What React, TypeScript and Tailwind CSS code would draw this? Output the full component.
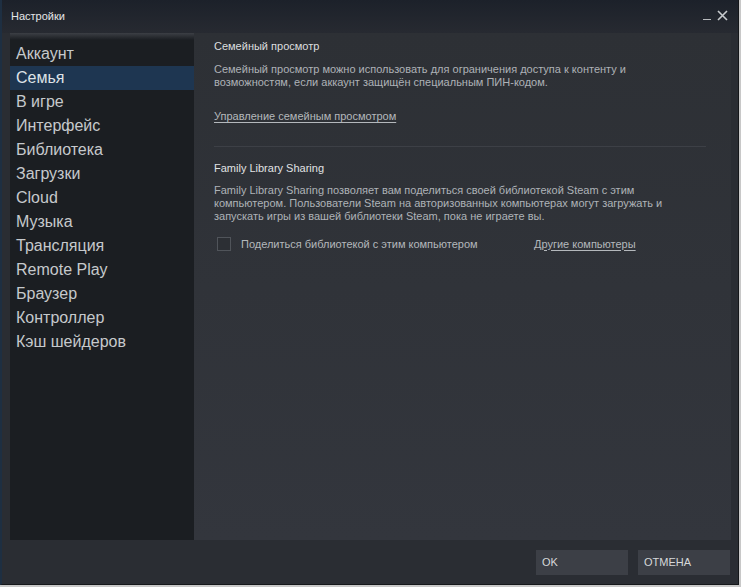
import React from "react";

const menu = [
  "Аккаунт",
  "Семья",
  "В игре",
  "Интерфейс",
  "Библиотека",
  "Загрузки",
  "Cloud",
  "Музыка",
  "Трансляция",
  "Remote Play",
  "Браузер",
  "Контроллер",
  "Кэш шейдеров",
];

const font = { fontFamily: '"Liberation Sans", Arial, sans-serif' };

const App: React.FC = () => {
  return (
    <div className="w-[741px] h-[587px] bg-[#c8c8c8] pr-[2px] pb-[2px]" style={font}>
      <div className="w-full h-full flex flex-col bg-[#2a2d33] border-r border-b border-[#15171a] border-l-2 border-l-[#1e2f42]">
        {/* title bar */}
        <div className="h-[33px] shrink-0 flex items-start justify-between bg-gradient-to-b from-[#1c212a] to-[#272a31] pl-[9px] pr-[10px]">
          <span className="mt-[10px] text-[11px] leading-[13px] text-[#e4e6e8]">Настройки</span>
          <div className="flex items-start gap-[6px] mt-[8px]">
            <span className="mt-[11px] w-[8px] h-[1px] bg-[#b8bbbe]" />
            <svg width="11" height="11" viewBox="0 0 11 11" className="mt-[2px]">
              <path d="M1 1 L10 10 M10 1 L1 10" stroke="#c8cbce" strokeWidth="1.6" />
            </svg>
          </div>
        </div>

        {/* body */}
        <div className="flex h-[507px] shrink-0 pl-[8px] pr-[7px]">
          <div className="w-[184px] bg-[#1b1e22] flex flex-col">
            <div className="h-[7px] bg-gradient-to-b from-[#3c3f45] to-[#1b1e22]" />
            <div className="pt-[2px]">
              {menu.map((item) => (
                <div
                  key={item}
                  className={`h-[24px] pl-[6px] text-[16px] leading-[24px] text-[#c6c9cc] ${
                    item === "Семья" ? "bg-[#1e3651] text-[#dfe3e7]" : ""
                  }`}
                >
                  {item}
                </div>
              ))}
            </div>
          </div>

          <div className="flex-1 bg-gradient-to-b from-[#2d3035] to-[#33363d] pl-[20px] pt-[7px] text-[11px] leading-[13px]">
            <div className="text-[#dcdedf]">Семейный просмотр</div>
            <p className="mt-[10px] text-[#aeb2b7]">
              Семейный просмотр можно использовать для ограничения доступа к контенту и
              <br />
              возможностям, если аккаунт защищён специальным ПИН-кодом.
            </p>
            <div className="mt-[21px] text-[#b4b8bc] underline underline-offset-2">
              Управление семейным просмотром
            </div>
            <div className="mt-[23px] w-[492px] h-[1px] bg-[#3d4046]" />
            <div className="mt-[15px] text-[#e0e2e4]">Family Library Sharing</div>
            <p className="mt-[9px] text-[#aeb2b7]">
              Family Library Sharing позволяет вам поделиться своей библиотекой Steam с этим
              <br />
              компьютером. Пользователи Steam на авторизованных компьютерах могут загружать и
              <br />
              запускать игры из вашей библиотеки Steam, пока не играете вы.
            </p>
            <div className="mt-[14px] flex items-center h-[14px]">
              <span className="ml-[3px] w-[14px] h-[14px] border border-[#50545a] bg-[#2c2f34]" />
              <span className="ml-[10px] w-[293px] text-[#b4b8bc]">
                Поделиться библиотекой с этим компьютером
              </span>
              <span className="text-[#b4b8bc] underline underline-offset-2">Другие компьютеры</span>
            </div>
          </div>
        </div>

        {/* footer */}
        <div className="flex-1 flex justify-end items-start gap-[10px] pt-[10px] pr-[8px]">
          <button className="w-[92px] h-[25px] bg-[#3c3f46] text-left pl-[6px] text-[11px] text-[#d6d8da]">
            OK
          </button>
          <button className="w-[92px] h-[25px] bg-[#3c3f46] text-left pl-[6px] text-[11px] text-[#d6d8da]">
            ОТМЕНА
          </button>
        </div>
      </div>
    </div>
  );
};

export default App;
